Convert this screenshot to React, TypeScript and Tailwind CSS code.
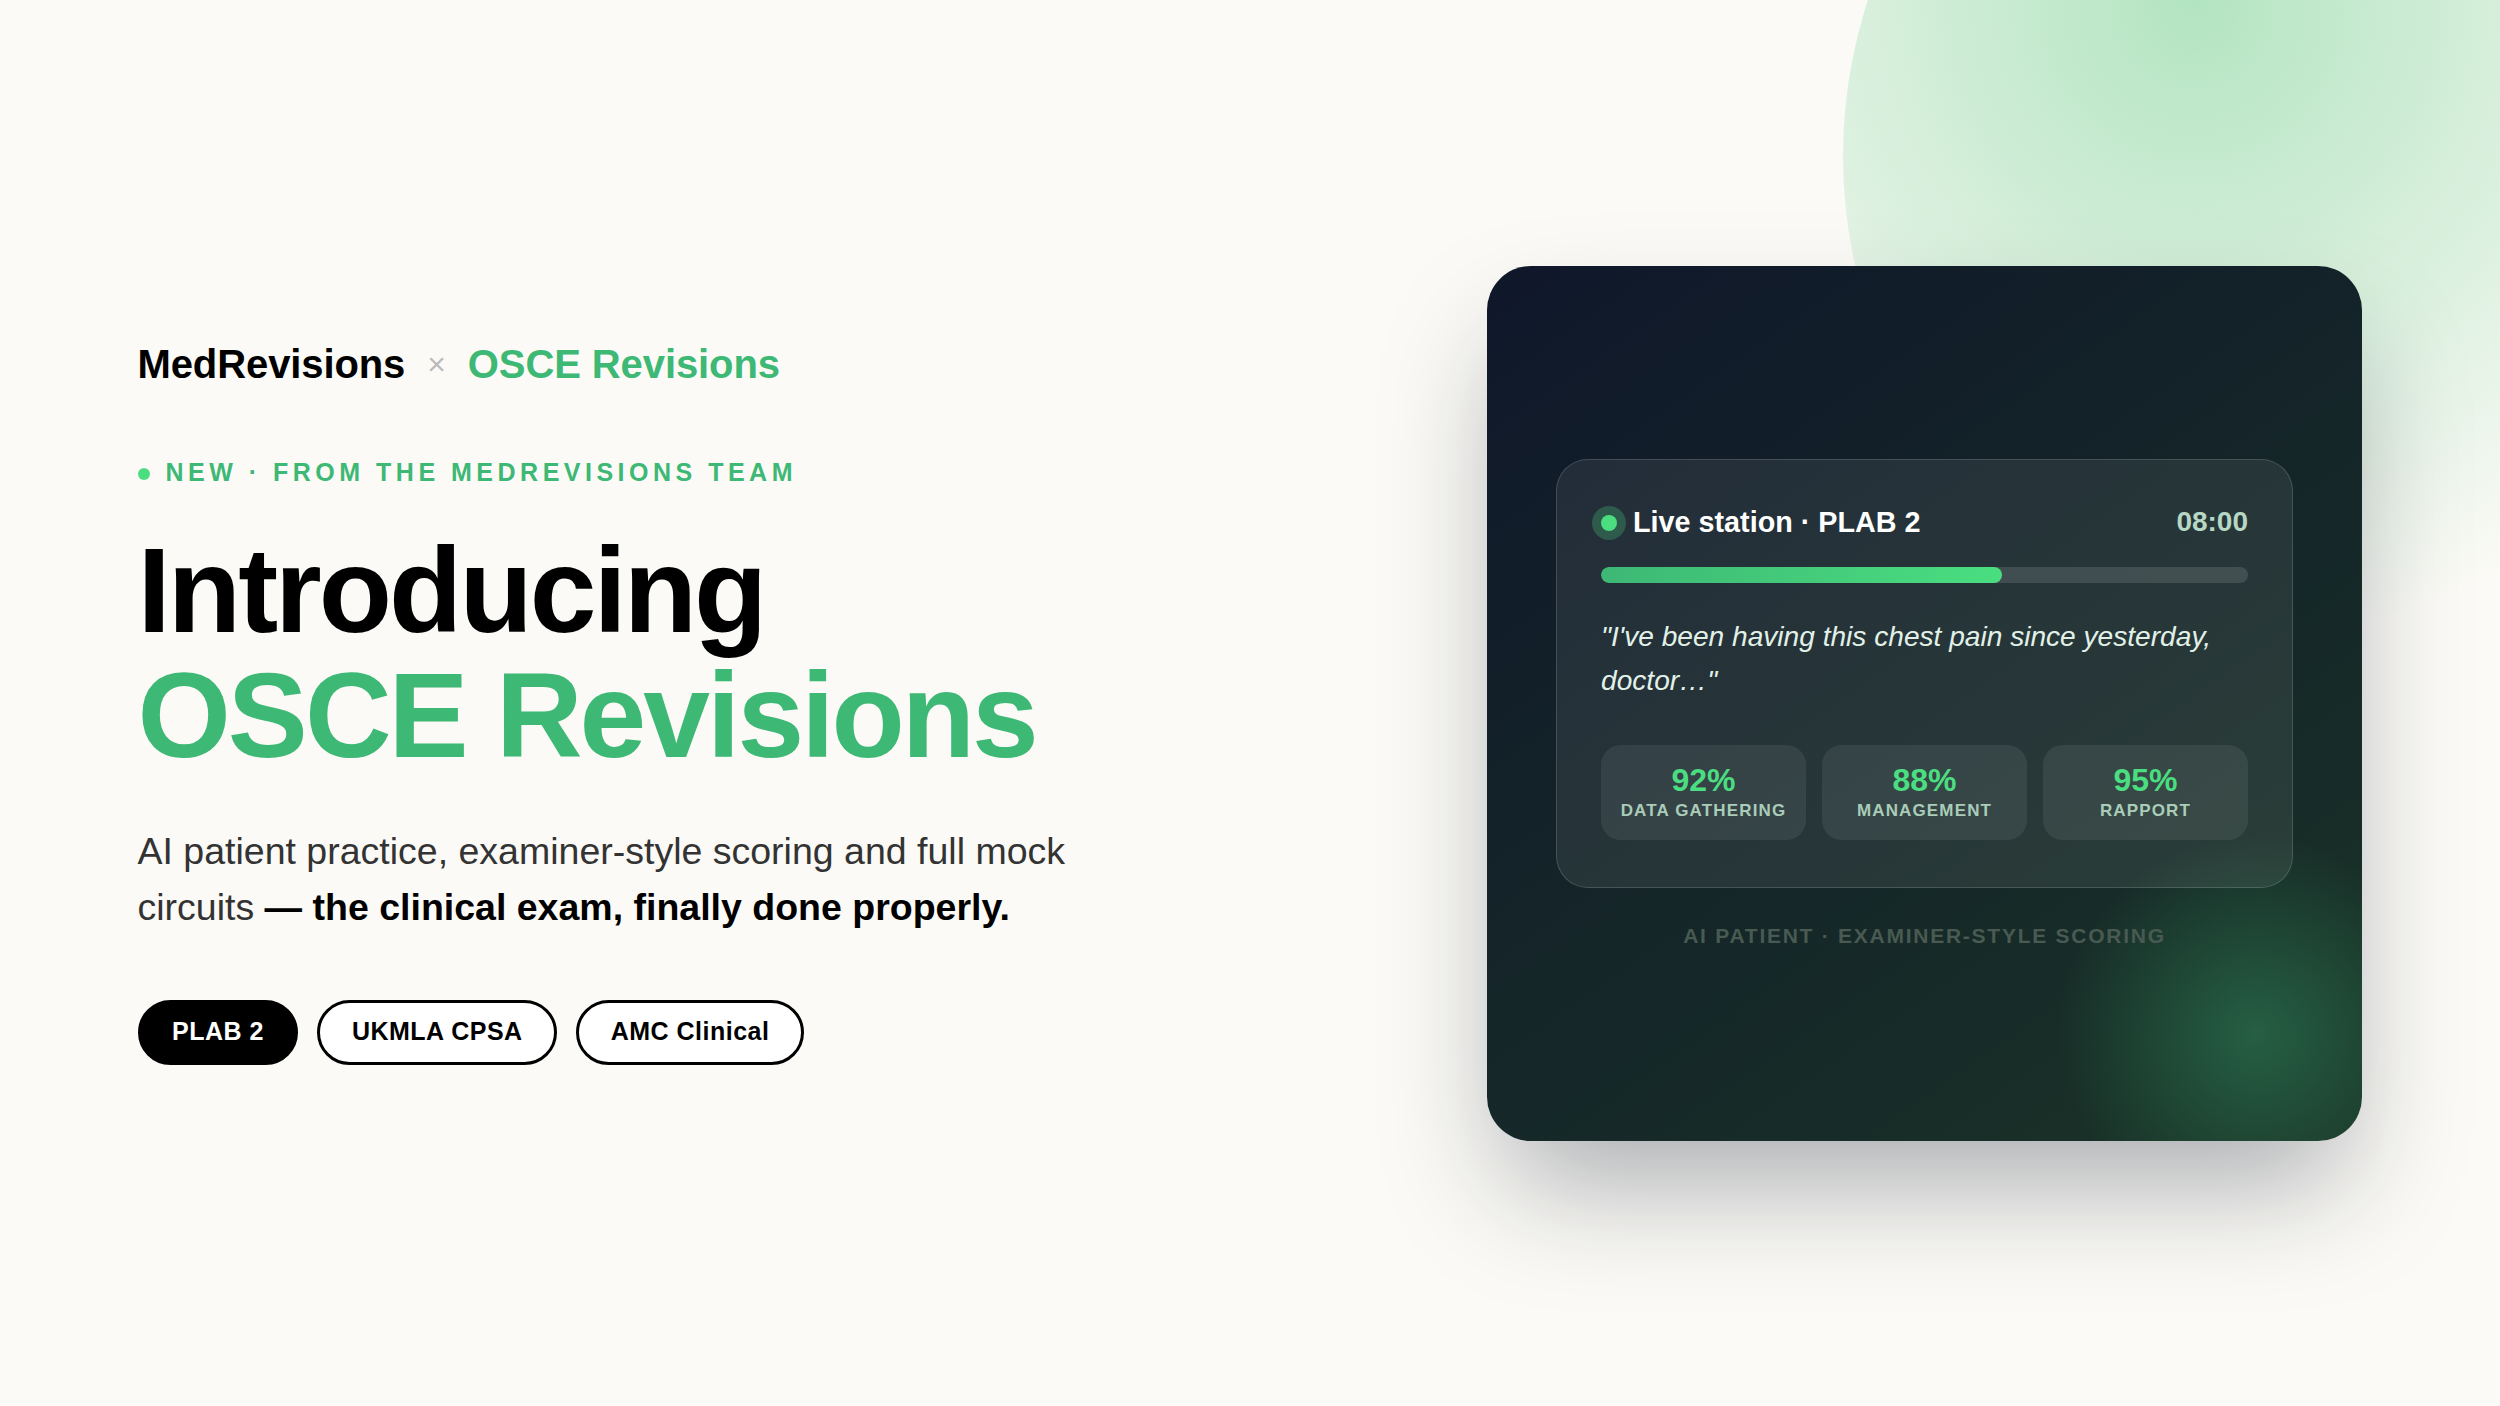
const STATS = [
  { value: "92%", label: "DATA GATHERING" },
  { value: "88%", label: "MANAGEMENT" },
  { value: "95%", label: "RAPPORT" },
];

const EXAMS = ["PLAB 2", "UKMLA CPSA", "AMC Clinical"];

function StationCard() {
  return (
    <div className="relative flex h-[875px] w-[875px] shrink-0 flex-col items-center justify-center overflow-hidden rounded-[44px] bg-[linear-gradient(145deg,#0f172a,#1a3327)] shadow-[0_60px_120px_-20px_rgba(15,23,42,0.35)]">
      <div className="absolute right-[-93px] bottom-[-92px] h-[400px] w-[400px] bg-[radial-gradient(circle,rgba(61,184,117,0.35),transparent_70%)]" />
      <div className="relative w-[737px] rounded-[32px] border border-white/15 bg-white/8 px-[44px] pt-[43px] pb-[47px]">
        <div className="flex items-center justify-between">
          <div className="flex items-center gap-4 text-[28.75px] leading-[38px] font-bold text-white">
            <span className="mt-[2px] h-4 w-4 rounded-full bg-[#4ade80] shadow-[0_0_0_9px_rgba(74,222,128,0.25)]" />
            Live station · PLAB 2
          </div>
          <span className="text-[28px] leading-[38px] font-bold text-[#b6d8c4]">08:00</span>
        </div>
        <div className="mt-[26px] h-4 overflow-hidden rounded-full bg-white/12">
          <div className="h-full w-[62%] rounded-full bg-[linear-gradient(90deg,#3db875,#4ade80)]" />
        </div>
        <p className="mt-[32.5px] text-[28.125px] leading-[44px] text-[#e2f1e8] italic">
          "I've been having this chest pain since yesterday, doctor…"
        </p>
        <div className="mt-[41.5px] grid grid-cols-3 gap-4">
          {STATS.map((s) => (
            <div key={s.label} className="flex h-[95px] flex-col items-center justify-center rounded-[20px] bg-white/7 pb-[2px]">
              <span className="text-[32px] leading-[36px] font-bold text-[#4ade80]">{s.value}</span>
              <span className="mt-[3px] text-[17px] leading-[20px] font-bold tracking-[1.15px] text-[#a9cdb8]">{s.label}</span>
            </div>
          ))}
        </div>
      </div>
      <p className="relative mt-[36px] text-[21px] leading-[24px] font-bold tracking-[0.083em] text-[#485a51]">
        AI PATIENT · EXAMINER-STYLE SCORING
      </p>
    </div>
  );
}

export default function App() {
  return (
    <main className="relative flex h-[1406px] w-full items-center justify-between overflow-hidden bg-[#fbfaf6] pr-[138px] pl-[137.5px] [font-family:'Liberation_Sans',Arial,sans-serif]">
      <div className="absolute top-[-344px] left-[1843px] h-[1000px] w-[1000px] rounded-full bg-[radial-gradient(circle_at_35%_35%,rgba(52,190,100,0.36),transparent_70%)]" />

      <section className="relative">
        <div className="flex items-center gap-[22px] text-[40px] leading-[46px] font-bold tracking-[-0.1px]">
          <span className="text-black">MedRevisions</span>
          <span className="text-[32px] font-normal text-[#bbbbbb]">×</span>
          <span className="text-[#3db875]">OSCE Revisions</span>
        </div>

        <div className="mt-[71px] flex items-center gap-4 text-[25px] leading-[29px] font-bold tracking-[0.18em] text-[#3db875]">
          <span className="mt-[3px] h-3 w-3 rounded-full bg-[#4ade80]" />
          NEW · FROM THE MEDREVISIONS TEAM
        </div>

        <h1 className="mt-[41px] text-[120px] leading-[125px] font-bold tracking-[-0.025em] text-black">
          Introducing
          <br />
          <span className="text-[#3db875]">OSCE Revisions</span>
        </h1>

        <p className="mt-[45px] w-[960px] text-[37.5px] leading-[56.25px] text-[#333333]">
          AI patient practice, examiner-style scoring and full mock circuits{" "}
          <strong className="font-bold text-black">— the clinical exam, finally done properly.</strong>
        </p>

        <div className="mt-[65px] flex gap-[19px]">
          {EXAMS.map((exam, i) => (
            <span
              key={exam}
              className={
                i === 0
                  ? "flex h-[65px] items-center rounded-full border-[3px] border-black bg-black px-[31.5px] pb-[3px] text-[25px] font-bold tracking-[0.5px] text-white"
                  : "flex h-[65px] items-center rounded-full border-[3px] border-black bg-white px-[31.5px] pb-[3px] text-[25px] font-bold tracking-[0.5px] text-black"
              }
            >
              {exam}
            </span>
          ))}
        </div>
      </section>

      <div className="relative">
        <StationCard />
      </div>
    </main>
  );
}
